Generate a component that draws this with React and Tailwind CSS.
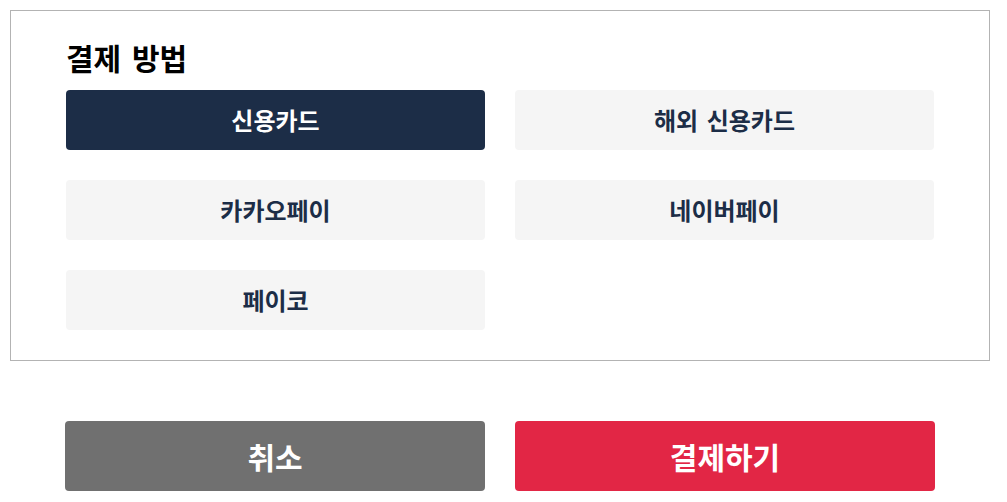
import React from 'react';

const methods = ['신용카드', '해외 신용카드', '카카오페이', '네이버페이', '페이코'];

export default function App() {
  const selected = '신용카드';

  return (
    <div className="min-h-screen bg-white p-[10px] font-['Noto_Sans_CJK_KR','Noto_Sans',sans-serif]">
      <section className="w-[980px] border border-[#b3b3b3] px-[55px] pt-[27px] pb-[30px]">
        <h2 className="text-[30px] font-bold leading-[38px] text-black [word-spacing:4px]">결제 방법</h2>
        <div className="mt-[14px] grid grid-cols-2 gap-[30px]">
          {methods.map((m) => (
            <button
              key={m}
              type="button"
              className={`h-[60px] rounded-[4px] text-[24px] font-bold [word-spacing:3px] ${
                m === selected ? 'bg-[#1c2d47] text-white' : 'bg-[#f5f5f5] text-[#1c2d47]'
              }`}
            >
              {m}
            </button>
          ))}
        </div>
      </section>

      <div className="mt-[60px] grid w-[980px] grid-cols-2 gap-[30px] px-[55px]">
        <button type="button" className="h-[70px] rounded-[4px] bg-[#707070] text-[30px] font-bold text-white">
          취소
        </button>
        <button type="button" className="h-[70px] rounded-[4px] bg-[#e22645] text-[30px] font-bold text-white">
          결제하기
        </button>
      </div>
    </div>
  );
}
